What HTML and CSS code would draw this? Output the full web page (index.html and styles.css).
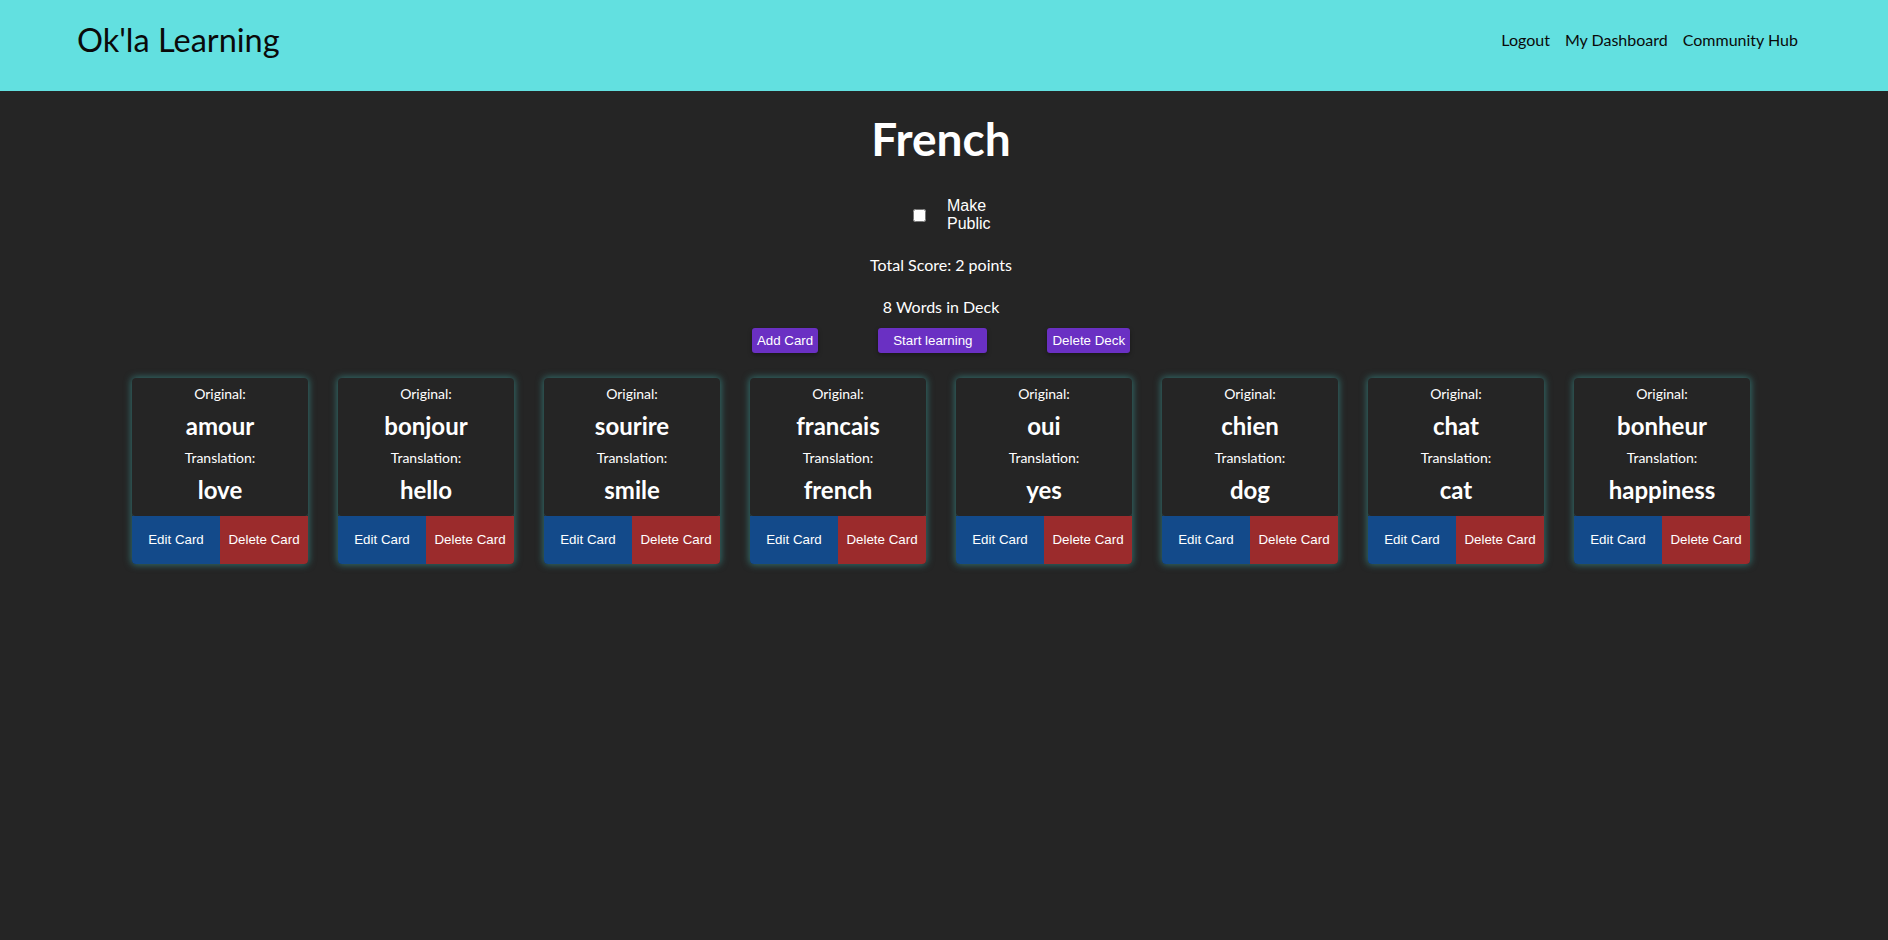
FILE: index.html
```html
<!DOCTYPE html>
<html lang="en">
<head>
<meta charset="utf-8">
<title>Ok'la Learning - French</title>
<link rel="stylesheet" href="styles.css">
</head>
<body>
<header class="topbar">
  <div class="brand">Ok'la Learning</div>
  <nav class="nav">
    <a class="nav-link" href="#">Logout</a>
    <a class="nav-link" href="#">My Dashboard</a>
    <a class="nav-link" href="#">Community Hub</a>
  </nav>
</header>
<main class="deck">
  <h1 class="deck-title">French</h1>
  <div class="public-row">
    <input type="checkbox" class="public-check" id="pub">
    <label class="public-label" for="pub">Make Public</label>
  </div>
  <p class="score">Total Score: 2 points</p>
  <p class="count">8 Words in Deck</p>
  <div class="actions">
    <button class="act">Add Card</button>
    <button class="act act-wide">Start learning</button>
    <button class="act">Delete Deck</button>
  </div>
  <div class="cards">
    <div class="card"><div class="card-body"><p class="lbl">Original:</p><p class="word">amour</p><p class="lbl lbl2">Translation:</p><p class="word word2">love</p></div><div class="card-btns"><button class="cb edit">Edit Card</button><button class="cb del">Delete Card</button></div></div>
    <div class="card"><div class="card-body"><p class="lbl">Original:</p><p class="word">bonjour</p><p class="lbl lbl2">Translation:</p><p class="word word2">hello</p></div><div class="card-btns"><button class="cb edit">Edit Card</button><button class="cb del">Delete Card</button></div></div>
    <div class="card"><div class="card-body"><p class="lbl">Original:</p><p class="word">sourire</p><p class="lbl lbl2">Translation:</p><p class="word word2">smile</p></div><div class="card-btns"><button class="cb edit">Edit Card</button><button class="cb del">Delete Card</button></div></div>
    <div class="card"><div class="card-body"><p class="lbl">Original:</p><p class="word">francais</p><p class="lbl lbl2">Translation:</p><p class="word word2">french</p></div><div class="card-btns"><button class="cb edit">Edit Card</button><button class="cb del">Delete Card</button></div></div>
    <div class="card"><div class="card-body"><p class="lbl">Original:</p><p class="word">oui</p><p class="lbl lbl2">Translation:</p><p class="word word2">yes</p></div><div class="card-btns"><button class="cb edit">Edit Card</button><button class="cb del">Delete Card</button></div></div>
    <div class="card"><div class="card-body"><p class="lbl">Original:</p><p class="word">chien</p><p class="lbl lbl2">Translation:</p><p class="word word2">dog</p></div><div class="card-btns"><button class="cb edit">Edit Card</button><button class="cb del">Delete Card</button></div></div>
    <div class="card"><div class="card-body"><p class="lbl">Original:</p><p class="word">chat</p><p class="lbl lbl2">Translation:</p><p class="word word2">cat</p></div><div class="card-btns"><button class="cb edit">Edit Card</button><button class="cb del">Delete Card</button></div></div>
    <div class="card"><div class="card-body"><p class="lbl">Original:</p><p class="word">bonheur</p><p class="lbl lbl2">Translation:</p><p class="word word2">happiness</p></div><div class="card-btns"><button class="cb edit">Edit Card</button><button class="cb del">Delete Card</button></div></div>
  </div>
</main>
</body>
</html>
```
FILE: styles.css
```css
html, body {
  margin: 0;
  padding: 0;
}
body {
  background: #252525;
  color: #fff;
  font-family: Lato, "Liberation Sans", sans-serif;
  min-height: 940px;
}
.topbar {
  height: 91px;
  box-sizing: border-box;
  background: #62e0e0;
  display: flex;
  align-items: center;
  justify-content: space-between;
  padding: 0 90px 11px 77px;
}
.brand {
  font-family: Lato, sans-serif;
  font-size: 32.5px;
  line-height: 38px;
  color: #0a0a0a;
}
.nav {
  display: flex;
  gap: 15px;
  margin-bottom: 2px;
}
.nav-link {
  font-family: Lato, sans-serif;
  font-size: 16px;
  line-height: 19px;
  color: #0a0a0a;
  text-decoration: none;
}
.deck {
  display: flex;
  flex-direction: column;
  align-items: center;
  padding-right: 6px;
}
.deck-title {
  margin: 19px 0 0;
  font-size: 46px;
  line-height: 58px;
  font-weight: 700;
}
.public-row {
  margin-top: 29px;
  display: flex;
  align-items: center;
  padding-left: 24px;
}
.public-check {
  margin: 0;
  width: 13px;
  height: 13px;
}
.public-label {
  margin-left: 21px;
  width: 46px;
  font-family: "Liberation Sans", Arial, sans-serif;
  font-size: 16px;
  line-height: 18.4px;
}
.score {
  margin: 21px 0 0;
  font-size: 16px;
  line-height: 19px;
}
.count {
  margin: 23px 0 0;
  font-size: 16px;
  line-height: 19px;
}
.actions {
  margin-top: 12px;
  display: flex;
  gap: 60px;
}
.act {
  font-family: "Liberation Sans", Arial, sans-serif;
  font-size: 13.33px;
  line-height: 15px;
  color: #fff;
  background: #6a30c3;
  border: none;
  border-radius: 3px;
  padding: 5px 5px;
  box-shadow: 0 2px 4px rgba(0, 0, 0, 0.35);
}
.act-wide {
  padding: 5px 15px;
}
.cards {
  margin-top: 25px;
  display: flex;
  gap: 30px;
}
.card {
  width: 176px;
  border-radius: 4px;
  box-shadow: 0 0 7px 1px rgba(60, 170, 165, 0.55);
  overflow: hidden;
  display: flex;
  flex-direction: column;
}
.card-body {
  background: #252525;
  border-radius: 4px;
  padding: 7px 0 11px;
  text-align: center;
  box-shadow: 0 0 0 1px rgba(60, 140, 140, 0.25);
}
.lbl {
  margin: 0;
  font-size: 14px;
  line-height: 17px;
}
.lbl2 {
  margin-top: 8px;
}
.word {
  margin: 9px 0 0;
  font-size: 24px;
  line-height: 30px;
  font-weight: 700;
}
.card-btns {
  display: flex;
  height: 48px;
}
.cb {
  flex: 1;
  border: none;
  color: #fff;
  font-family: "Liberation Sans", Arial, sans-serif;
  font-size: 13.33px;
  padding: 0;
}
.edit {
  background: #134a8a;
}
.del {
  background: #9b2b2c;
}
```
